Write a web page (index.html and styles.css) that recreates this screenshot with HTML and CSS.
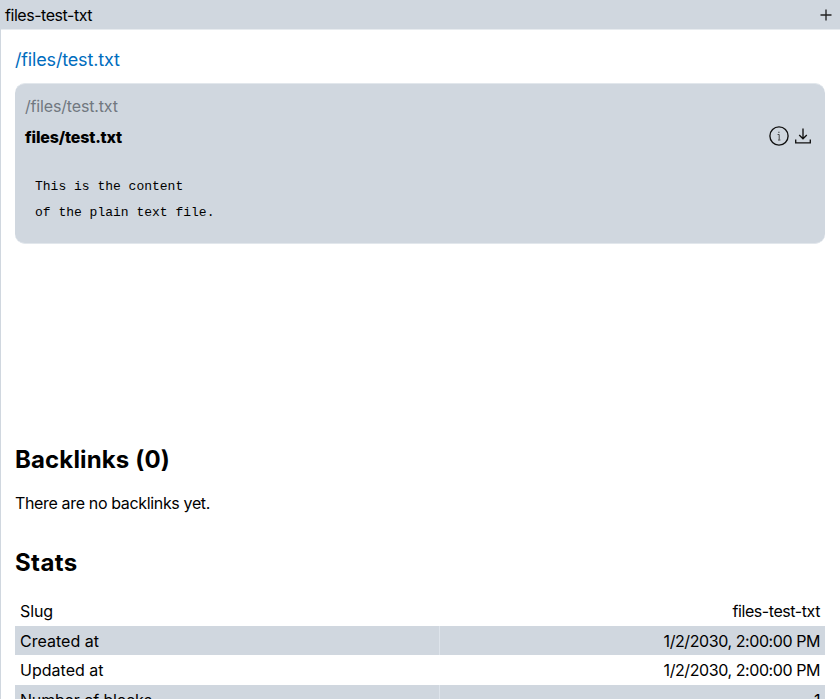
FILE: index.html
```html
<!DOCTYPE html>
<html lang="en">
<head>
<meta charset="utf-8">
<title>files-test-txt</title>
<link rel="stylesheet" href="styles.css">
</head>
<body>
<div class="note">
  <header class="bar">
    <span class="bar-title">files-test-txt</span>
    <svg class="plus" viewBox="0 0 12 12" width="12" height="12"><path d="M6 .5v11M.5 6h11"/></svg>
  </header>
  <main class="content">
    <a class="link">/files/test.txt</a>
    <section class="card">
      <p class="path">/files/test.txt</p>
      <div class="card-head">
        <h3 class="name">files/test.txt</h3>
        <div class="actions">
          <svg viewBox="0 0 20 20" width="20" height="20"><circle cx="10" cy="10" r="9.1"/><path class="thin" d="M8.6 8.5h1.6v5.2M9 14h2.4M9.9 5.7v1.3"/></svg>
          <svg viewBox="0 0 16 16" width="16" height="16"><path d="M8 .5v10M4.2 7L8 10.7 11.8 7M.7 11.5v3.4h14.6v-3.4"/></svg>
        </div>
      </div>
      <pre class="text">This is the content
of the plain text file.</pre>
    </section>
    <section class="backlinks">
      <h2 class="h-back">Backlinks (0)</h2>
      <p class="none">There are no backlinks yet.</p>
    </section>
    <section class="stats">
      <h2 class="h-stats">Stats</h2>
      <div class="table">
        <div class="row"><span class="key k1">Slug</span><span class="val v1">files-test-txt</span></div>
        <div class="row"><span class="key k2">Created at</span><span class="val v2">1/2/2030, 2:00:00 PM</span></div>
        <div class="row"><span class="key k2">Updated at</span><span class="val v2">1/2/2030, 2:00:00 PM</span></div>
        <div class="row"><span class="key k4">Number of blocks</span><span class="val v2">1</span></div>
      </div>
    </section>
  </main>
</div>
</body>
</html>
```
FILE: styles.css
```css
* { box-sizing: border-box; margin: 0; }
html, body { height: 100%; overflow: hidden; }
body { font: 16px/20px Inter, "Liberation Sans", sans-serif; color: #000; background: #fff; }
.note { height: 699px; overflow: hidden; border-left: 1px solid #d0d7df; }
.bar { display: flex; align-items: center; justify-content: space-between; height: 30px; padding: 1px 8px 0 4px; background: #d0d7df; border-bottom: 1px solid #e7ebef; }
.bar-title { letter-spacing: -.45px; }
svg { display: block; fill: none; stroke: #111; stroke-width: 1.35; }
.plus { stroke: #222; }
.thin { stroke-width: 1; stroke: #444; }
.content { padding: 18px 15px 0 14px; }
.link { display: block; height: 24px; font-size: 18px; line-height: 24px; color: #006dbe; letter-spacing: -.16px; }
.card { height: 161px; margin-top: 11px; padding: 12px 14px 0 10px; border-radius: 10px; background: #d0d7df; border: 0 solid #e2e7ec; border-width: 1px 0; }
.path { color: #717880; letter-spacing: -.16px; }
.card-head { display: flex; justify-content: space-between; height: 22px; margin-top: 10px; }
.name { font-size: 16px; line-height: 22px; font-weight: 800; letter-spacing: -.17px; }
.actions { display: flex; align-items: center; gap: 6px; height: 20px; }
.text { margin: 26px 0 0 10px; font: 13px/26px "Liberation Mono", monospace; }
.backlinks { margin-top: 201px; }
h2 { font-size: 24px; line-height: 30px; font-weight: 700; }
.h-back { letter-spacing: .14px; }
.h-stats { letter-spacing: .4px; }
.none { margin-top: 18px; letter-spacing: -.35px; }
.stats { margin-top: 35px; }
.table { margin-top: 18px; }
.row { display: grid; grid-template-columns: 425px 1fr; grid-template-rows: 29px; height: 29.5px; line-height: 31px; }
.row:nth-child(even) { background: #d0d7df; }
.key { padding-left: 5px; border-right: 1px solid transparent; }
.k1 { letter-spacing: -.1px; }
.k2 { letter-spacing: .02px; }
.k4 { letter-spacing: -.18px; }
.row:nth-child(even) .key { border-color: #dee4eb; }
.val { padding-right: 5px; text-align: right; }
.v1 { letter-spacing: -.43px; }
.v2 { letter-spacing: -.42px; }
```
